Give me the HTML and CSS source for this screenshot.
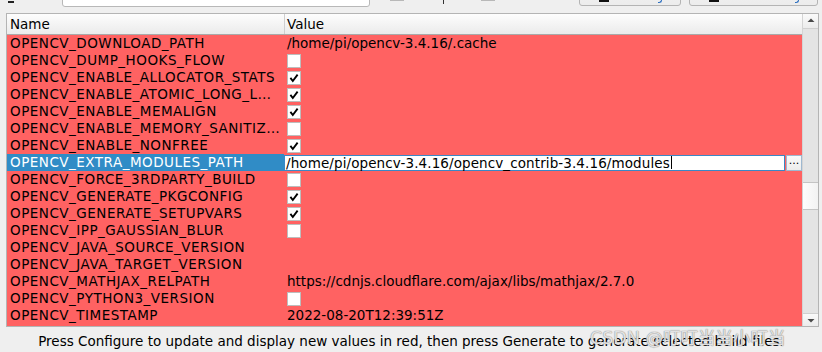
FILE: index.html
```html
<!DOCTYPE html>
<html>
<head>
<meta charset="utf-8">
<link rel="stylesheet" href="styles.css">
</head>
<body>
<div class="top">
  <span class="dash"></span>
  <span class="search"></span>
  <span class="tick tick1"></span>
  <span class="pstem"></span>
  <span class="tick tick2"></span>
  <span class="btn btn1"><i class="ul"></i><i class="mark"></i></span>
  <span class="btn btn2"><i class="ul"></i><i class="mark"></i></span>
</div>
<div class="tree">
  <div class="view">
    <div class="header">
      <div class="hname">Name</div>
      <div class="hvalue">Value</div>
    </div>
    <div class="rows">
      <div class="row"><div class="name">OPENCV_DOWNLOAD_PATH</div><div class="value">/home/pi/opencv-3.4.16/.cache</div></div>
      <div class="row"><div class="name">OPENCV_DUMP_HOOKS_FLOW</div><div class="value"><span class="cb"></span></div></div>
      <div class="row"><div class="name">OPENCV_ENABLE_ALLOCATOR_STATS</div><div class="value"><span class="cb on"><svg viewBox="0 0 13 13"><path d="M2.6 6.4 L5.2 9.8 L10.4 2.8"/></svg></span></div></div>
      <div class="row"><div class="name">OPENCV_ENABLE_ATOMIC_LONG_L…</div><div class="value"><span class="cb on"><svg viewBox="0 0 13 13"><path d="M2.6 6.4 L5.2 9.8 L10.4 2.8"/></svg></span></div></div>
      <div class="row"><div class="name">OPENCV_ENABLE_MEMALIGN</div><div class="value"><span class="cb on"><svg viewBox="0 0 13 13"><path d="M2.6 6.4 L5.2 9.8 L10.4 2.8"/></svg></span></div></div>
      <div class="row"><div class="name">OPENCV_ENABLE_MEMORY_SANITIZ…</div><div class="value"><span class="cb"></span></div></div>
      <div class="row"><div class="name">OPENCV_ENABLE_NONFREE</div><div class="value"><span class="cb on"><svg viewBox="0 0 13 13"><path d="M2.6 6.4 L5.2 9.8 L10.4 2.8"/></svg></span></div></div>
      <div class="row selected"><div class="name">OPENCV_EXTRA_MODULES_PATH</div><div class="value editing"><span class="edit">/home/pi/opencv-3.4.16/opencv_contrib-3.4.16/modules<i class="caret"></i></span><span class="dots">...</span></div></div>
      <div class="row"><div class="name">OPENCV_FORCE_3RDPARTY_BUILD</div><div class="value"><span class="cb"></span></div></div>
      <div class="row"><div class="name">OPENCV_GENERATE_PKGCONFIG</div><div class="value"><span class="cb on"><svg viewBox="0 0 13 13"><path d="M2.6 6.4 L5.2 9.8 L10.4 2.8"/></svg></span></div></div>
      <div class="row"><div class="name">OPENCV_GENERATE_SETUPVARS</div><div class="value"><span class="cb on"><svg viewBox="0 0 13 13"><path d="M2.6 6.4 L5.2 9.8 L10.4 2.8"/></svg></span></div></div>
      <div class="row"><div class="name">OPENCV_IPP_GAUSSIAN_BLUR</div><div class="value"><span class="cb"></span></div></div>
      <div class="row"><div class="name">OPENCV_JAVA_SOURCE_VERSION</div><div class="value"></div></div>
      <div class="row"><div class="name">OPENCV_JAVA_TARGET_VERSION</div><div class="value"></div></div>
      <div class="row"><div class="name">OPENCV_MATHJAX_RELPATH</div><div class="value">https://cdnjs.cloudflare.com/ajax/libs/mathjax/2.7.0</div></div>
      <div class="row"><div class="name">OPENCV_PYTHON3_VERSION</div><div class="value"><span class="cb"></span></div></div>
      <div class="row"><div class="name">OPENCV_TIMESTAMP</div><div class="value">2022-08-20T12:39:51Z</div></div>
      <div class="row"><div class="name"></div><div class="value"><span class="cb"></span></div></div>
    </div>
  </div>
  <div class="scrollbar">
    <div class="sb-btn up"><svg viewBox="0 0 14 13"><path d="M3.5 8 L7 4.5 L10.5 8 Z"/></svg></div>
    <div class="sb-track">
      <div class="sb-space top-space"></div>
      <div class="sb-thumb"></div>
      <div class="sb-space"></div>
    </div>
    <div class="sb-btn down"><svg viewBox="0 0 14 12"><path d="M3.5 4.5 L7 8 L10.5 4.5 Z"/></svg></div>
  </div>
</div>
<div class="status">Press Configure to update and display new values in red, then press Generate to generate selected build files.</div>
<div class="watermark">CSDN @叮叮当当小叮当</div>
</body>
</html>
```
FILE: styles.css
```css
html, body {
  margin: 0;
  padding: 0;
}
body {
  width: 822px;
  height: 352px;
  overflow: hidden;
  background: #efefef;
  font-family: "DejaVu Sans", "Noto Sans CJK SC", sans-serif;
  font-size: 13.5px;
  color: #000;
  position: relative;
}

/* top strip: only the bottoms of widgets are visible */
.top {
  height: 7px;
  overflow: hidden;
  display: flex;
  align-items: flex-end;
}
.top span { flex: none; }
.dash {
  width: 6px;
  height: 2px;
  background: #222;
  margin: 0 0 4px 8px;
}
.search {
  width: 306px;
  height: 24px;
  margin-left: 48px;
  background: #fff;
  border: 1px solid #b8b8b8;
  border-radius: 3px;
}
.tick {
  width: 12px;
  height: 14px;
  border: 1px solid #b8b8b8;
  background: #e6e6e6;
  margin-bottom: 6px;
}
.tick1 { margin-left: 20px; }
.pstem {
  width: 1px;
  height: 4px;
  background: #333;
  margin: 0 0 3px 39px;
}
.tick2 { margin-left: 37px; }
.btn {
  position: relative;
  height: 26px;
  background: linear-gradient(#f6f6f6, #ececec);
  border: 1px solid #b4b4b4;
  border-radius: 3px;
  margin-bottom: 1px;
}
.btn1 { width: 100px; margin-left: 84px; }
.btn2 { width: 127px; margin-left: 8px; }
.btn .ul {
  position: absolute;
  left: 19px;
  bottom: 3px;
  width: 10px;
  height: 2px;
  background: #111;
}
.btn .mark {
  position: absolute;
  right: 18px;
  bottom: 2px;
  width: 3px;
  height: 4px;
  border-right: 1px solid #2b6fc0;
  border-bottom: 1px solid #2b6fc0;
  border-radius: 0 0 3px 0;
}

/* tree */
.tree {
  margin: 6px 3px 0 6px;
  height: 312px;
  border: 1px solid #b4b4b4;
  display: flex;
  background: #efefef;
}
.view {
  width: 797px;
  display: flex;
  flex-direction: column;
  overflow: hidden;
}
.header {
  display: flex;
  height: 20px;
  border-bottom: 1px solid #a9a9a9;
  background: linear-gradient(#fdfdfd, #ebebeb);
  flex: none;
}
.hname {
  width: 274px;
  padding-left: 3px;
  border-right: 1px solid #cfcfcf;
  line-height: 20px;
}
.hvalue {
  padding-left: 2px;
  line-height: 20px;
}
.rows {
  flex: 1;
  overflow: hidden;
  background: #ff6262;
}
.row {
  display: flex;
  height: 17px;
  line-height: 17px;
}
.name {
  width: 274px;
  padding-left: 3px;
  white-space: nowrap;
  overflow: hidden;
  letter-spacing: 0.5px;
}
.value {
  flex: 1;
  padding-left: 3px;
  white-space: nowrap;
  display: flex;
  align-items: center;
}
.selected .name {
  background: #308cc6;
  color: #fff;
  width: 277px;
  padding-left: 3px;
}
.cb {
  box-sizing: border-box;
  width: 14px;
  height: 14px;
  background: #fff;
  border: 1px solid #bdbdbd;
  display: flex;
}
.cb svg {
  width: 12px;
  height: 12px;
}
.cb path {
  fill: none;
  stroke: #000;
  stroke-width: 2;
  stroke-linejoin: miter;
}
.value.editing {
  padding-left: 0;
  background: #ff6262;
}
.edit {
  box-sizing: border-box;
  width: 501px;
  height: 16px;
  line-height: 14px;
  background: #fff;
  border: 1px solid #3a88c6;
  padding-left: 1px;
  display: flex;
  align-items: center;
  letter-spacing: 0.1px;
}
.caret {
  display: inline-block;
  width: 1px;
  height: 13px;
  background: #000;
  margin-left: 1px;
}
.dots {
  box-sizing: border-box;
  width: 16px;
  height: 16px;
  margin-left: 1px;
  background: linear-gradient(#fafafa, #ececec);
  border: 1px solid #9eb8d0;
  line-height: 10px;
  text-align: center;
  font-size: 11px;
}

/* scrollbar */
.scrollbar {
  width: 15px;
  display: flex;
  flex-direction: column;
  background: #e4e4e4;
  border-left: 1px solid #d4d4d4;
}
.sb-btn {
  flex: none;
  display: flex;
  justify-content: center;
  background: linear-gradient(#fafafa, #ececec);
}
.sb-btn.up {
  height: 14px;
  border-bottom: 1px solid #d0d0d0;
}
.sb-btn.down {
  height: 12px;
  border-top: 1px solid #d0d0d0;
}
.sb-btn svg { width: 14px; height: 13px; }
.sb-btn path { fill: #4a4a4a; }
.sb-track {
  flex: 1;
  display: flex;
  flex-direction: column;
}
.sb-space { flex: 1; }
.sb-space.top-space { flex: none; height: 153px; }
.sb-thumb {
  height: 26px;
  background: linear-gradient(90deg, #fdfdfd, #f2f2f2);
  border-top: 1px solid #c4c4c4;
  border-bottom: 1px solid #c4c4c4;
}

/* status */
.status {
  height: 25px;
  line-height: 28px;
  text-align: center;
  white-space: nowrap;
}
.watermark {
  position: absolute;
  left: 590px;
  top: 324px;
  font-size: 17.5px;
  color: rgba(255, 255, 255, 0.75);
  text-shadow: 0 0 1px #8a8a8a, 0 0 1px #8a8a8a;
  white-space: nowrap;
}
```
